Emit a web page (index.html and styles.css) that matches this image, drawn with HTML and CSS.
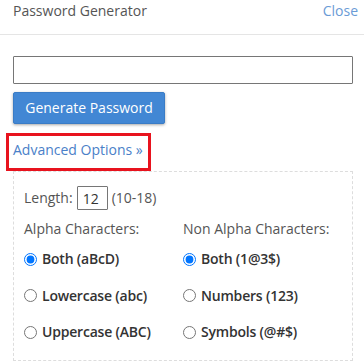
FILE: index.html
```html
<!DOCTYPE html>
<html>
<head>
<meta charset="utf-8">
<link rel="stylesheet" href="styles.css">
</head>
<body>
<div class="header">
  <span class="title">Password Generator</span>
  <a class="close" href="#">Close</a>
</div>
<div class="content">
  <input class="pw" type="text">
  <button class="gen">Generate Password</button>
  <div class="adv-row">
    <a class="adv" href="#">Advanced Options »</a>
    <div class="highlight"></div>
  </div>
  <div class="options">
    <div class="length-row">
      <span>Length:</span>
      <input class="len" type="text" value="12">
      <span>(10-18)</span>
    </div>
    <div class="cols">
      <div class="col">
        <div class="col-title">Alpha Characters:</div>
        <label class="opt"><input type="radio" name="a" checked>Both (aBcD)</label>
        <label class="opt"><input type="radio" name="a">Lowercase (abc)</label>
        <label class="opt"><input type="radio" name="a">Uppercase (ABC)</label>
      </div>
      <div class="col">
        <div class="col-title">Non Alpha Characters:</div>
        <label class="opt"><input type="radio" name="n" checked>Both (1@3$)</label>
        <label class="opt"><input type="radio" name="n">Numbers (123)</label>
        <label class="opt"><input type="radio" name="n">Symbols (@#$)</label>
      </div>
    </div>
  </div>
</div>
</body>
</html>
```
FILE: styles.css
```css
* { box-sizing: border-box; }
html, body { margin: 0; padding: 0; background: #fff; }
body {
  font-family: "Open Sans", "Liberation Sans", sans-serif;
  font-size: 14px;
  line-height: 20px;
  color: #333;
  width: 364px;
  height: 362px;
  overflow: hidden;
}
.header {
  height: 35px;
  border-bottom: 1px solid #e5e5e5;
  display: flex;
  justify-content: space-between;
  align-items: flex-start;
  padding: 1px 6px 0 13px;
}
.title { color: #555; }
.close { color: #6a9bd6; text-decoration: none; }
.content { padding: 21px 11px 0 13px; }
.pw {
  display: block;
  width: 340px;
  height: 28px;
  border: 1px solid #767676;
  border-radius: 1px;
  margin: 0;
  font: inherit;
}
.gen {
  display: block;
  margin-top: 8px;
  width: 152px;
  height: 32px;
  background: #4287d4;
  border: 1px solid #3a7cc6;
  border-radius: 2px;
  color: #fff;
  font: inherit;
  font-size: 14px;
  padding: 0;
  box-shadow: 0 1px 3px rgba(0,0,0,0.35);
}
.adv-row {
  position: relative;
  margin-top: 16px;
  height: 31px;
}
.adv { color: #4a80c8; text-decoration: none; }
.highlight {
  position: absolute;
  left: -7px;
  top: -7px;
  width: 145px;
  height: 38px;
  border: 3px solid #e8131e;
}
.options {
  width: 340px;
  height: 190px;
  border: 1px dashed #ddd;
  padding: 14px 10px 0 10px;
}
.length-row {
  display: flex;
  align-items: center;
  height: 24px;
  color: #555;
}
.len {
  width: 31px;
  height: 24px;
  border: 1px solid #767676;
  border-radius: 1px;
  margin: 0 4px 0 4px;
  padding: 0 0 0 5px;
  font: inherit;
  color: #333;
}
.cols {
  display: grid;
  grid-template-columns: 1fr 1fr;
  margin-top: 9px;
}
.col { display: flex; flex-direction: column; }
.col-title { color: #555; margin-bottom: 10px; }
.opt {
  display: flex;
  align-items: center;
  font-weight: 600;
  letter-spacing: -0.2px;
  color: #333;
  height: 20px;
  margin-bottom: 16.5px;
}
.opt input {
  margin: 0 5px 0 0;
  width: 13px;
  height: 13px;
}
```
